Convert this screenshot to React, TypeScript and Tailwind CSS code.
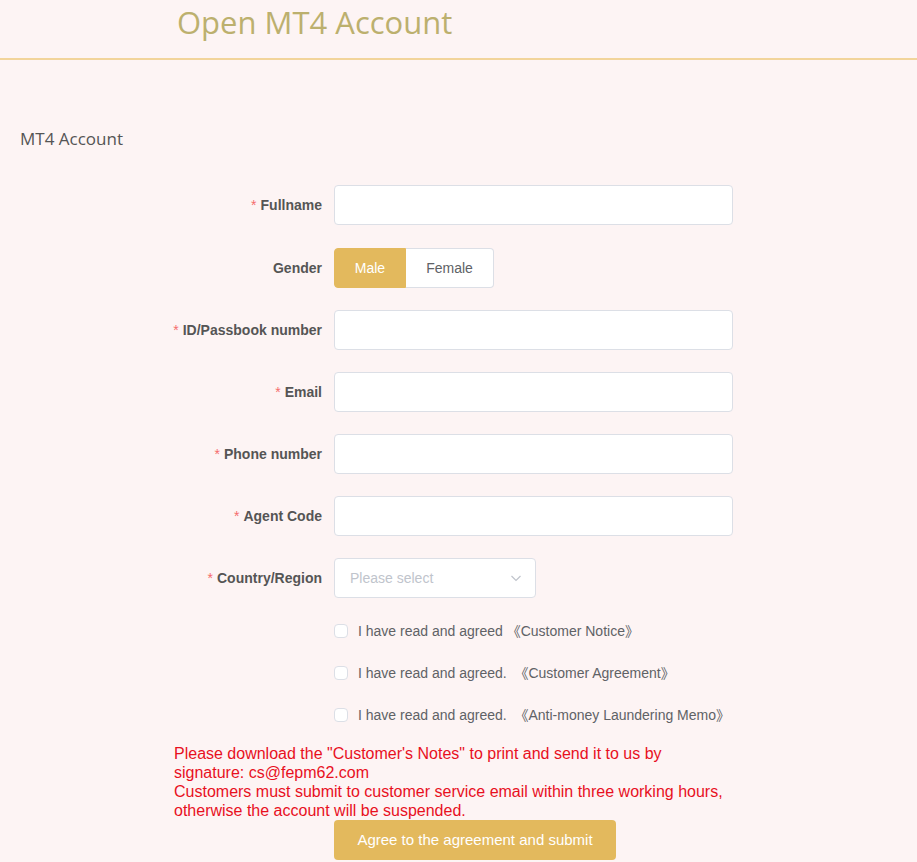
import { useState } from 'react';

type Field = { label: string; required: boolean };

const textFields: Field[] = [
  { label: 'ID/Passbook number', required: true },
  { label: 'Email', required: true },
  { label: 'Phone number', required: true },
  { label: 'Agent Code', required: true },
];

const agreements = [
  'I have read and agreed \u300ACustomer Notice\u300B',
  'I have read and agreed.  \u300ACustomer Agreement\u300B',
  'I have read and agreed.  \u300AAnti-money Laundering Memo\u300B',
];

function FormLabel({ label, required }: Field) {
  return (
    <div className="flex w-[160px] shrink-0 justify-end whitespace-nowrap pr-3 text-sm font-bold text-[#555]">
      {required && <span className="mr-1 font-normal text-[#f56c6c]">*</span>}
      {label}
    </div>
  );
}

function TextRow({ label, required }: Field) {
  return (
    <div className="mb-[22px] flex h-10 items-center">
      <FormLabel label={label} required={required} />
      <input className="h-10 w-[399px] rounded border border-[#dcdfe6] bg-white px-[15px] text-sm outline-none" />
    </div>
  );
}

export default function App() {
  const [gender, setGender] = useState<'male' | 'female'>('male');
  const [checked, setChecked] = useState([false, false, false]);

  return (
    <div
      className="min-h-[862px] bg-[#fdf4f4]"
      style={{ fontFamily: '"Liberation Sans", Arial, "Noto Sans CJK SC", sans-serif' }}
    >
      {/* Header */}
      <div className="h-[60px] border-b-2 border-[#f2d49a]">
        <h1
          className="pl-[177px] text-[31px] leading-[44px] text-[#bcb06e]"
          style={{ fontFamily: '"Open Sans", sans-serif' }}
        >
          Open MT4 Account
        </h1>
      </div>

      <div
        className="pl-5 pt-[67px] text-[17px] leading-6 text-[#555]"
        style={{ fontFamily: '"Open Sans", sans-serif' }}
      >
        MT4 Account
      </div>

      {/* Form */}
      <div className="pl-[174px] pt-[34px]">
        <div className="mb-[23px] flex h-10 items-center">
          <FormLabel label="Fullname" required />
          <input className="h-10 w-[399px] rounded border border-[#dcdfe6] bg-white px-[15px] text-sm outline-none" />
        </div>

        <div className="mb-[22px] flex h-10 items-center">
          <FormLabel label="Gender" required={false} />
          <div className="flex h-10 text-sm">
            <button
              onClick={() => setGender('male')}
              className={
                gender === 'male'
                  ? 'h-10 w-[72px] rounded-l border border-[#e3b95d] bg-[#e3b95d] text-white'
                  : 'h-10 w-[72px] rounded-l border border-[#dcdfe6] bg-white text-[#606266]'
              }
            >
              Male
            </button>
            <button
              onClick={() => setGender('female')}
              className={
                gender === 'female'
                  ? 'h-10 w-[88px] rounded-r border border-[#e3b95d] bg-[#e3b95d] text-white'
                  : 'h-10 w-[88px] rounded-r border border-l-0 border-[#dcdfe6] bg-white text-[#606266]'
              }
            >
              Female
            </button>
          </div>
        </div>

        {textFields.map((f) => (
          <TextRow key={f.label} label={f.label} required={f.required} />
        ))}

        <div className="mb-[22px] flex h-10 items-center">
          <FormLabel label="Country/Region" required />
          <div className="flex h-10 w-[202px] items-center justify-between rounded border border-[#dcdfe6] bg-white pl-[15px] pr-[12px] text-sm text-[#c0c4cc]">
            <span>Please select</span>
            <svg width="14" height="14" viewBox="0 0 14 14" fill="none">
              <path d="M2.5 5l4.5 4.5L11.5 5" stroke="#c0c4cc" strokeWidth="1.2" />
            </svg>
          </div>
        </div>

        <div className="mb-[18px] flex flex-col gap-5">
          {agreements.map((text, i) => (
            <div key={i} className="flex h-[22px] items-center pl-[160px] text-sm text-[#606266]">
              <button
                onClick={() => setChecked(checked.map((c, j) => (j === i ? !c : c)))}
                className={
                  checked[i]
                    ? 'mr-[10px] h-[14px] w-[14px] rounded-sm border border-[#e3b95d] bg-[#e3b95d]'
                    : 'mr-[10px] h-[14px] w-[14px] rounded-sm border border-[#dcdfe6] bg-white'
                }
              />
              <span className="whitespace-pre">{text}</span>
            </div>
          ))}
        </div>

        <p className="w-[560px] text-base leading-[19px] text-[#e8101e]">
          Please download the "Customer's Notes" to print and send it to us by signature: cs@fepm62.com
          <br />
          Customers must submit to customer service email within three working hours, otherwise the account will be suspended.
        </p>

        <div className="pl-[160px]">
          <button className="h-10 w-[282px] rounded bg-[#e3b95d] text-[15px] text-white">
            Agree to the agreement and submit
          </button>
        </div>
      </div>
    </div>
  );
}
